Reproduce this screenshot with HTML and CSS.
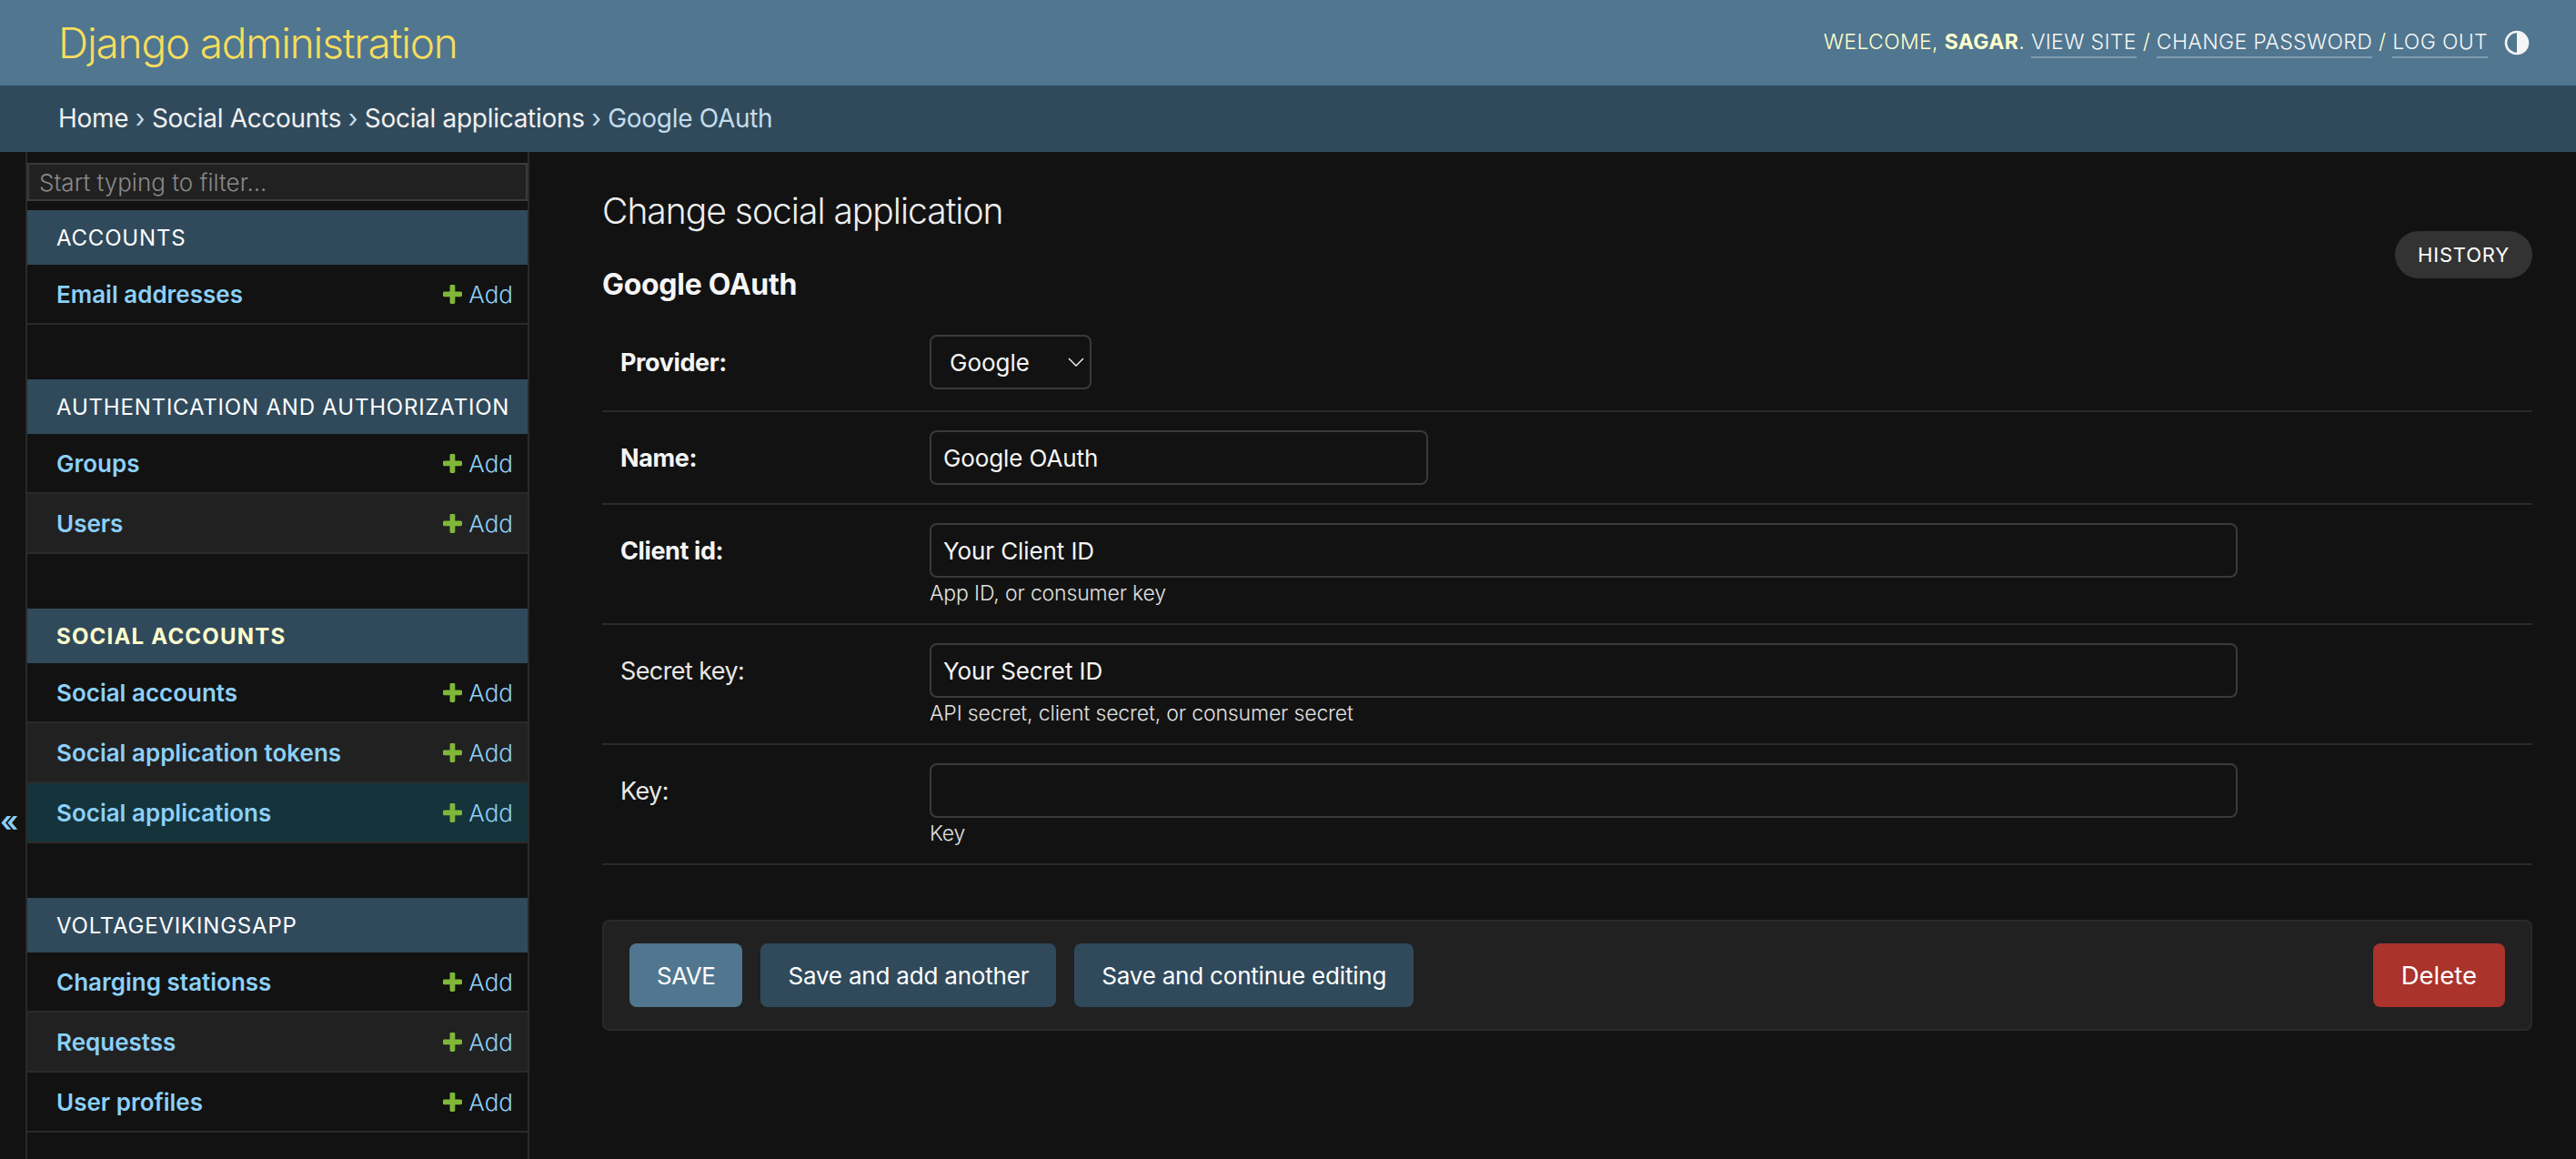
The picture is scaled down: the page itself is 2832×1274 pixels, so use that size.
FILE: index.html
```html
<!DOCTYPE html>
<html lang="en">
<head>
    <meta charset="UTF-8">
    <title>Change social application | Django site admin</title>
    <link rel="stylesheet" href="styles.css">
</head>
<body>

    <svg class="sprite" width="0" height="0">
        <symbol id="plus" viewBox="200 200 1400 1400">
            <path d="M1600 796v192q0 40-28 68t-68 28h-416v416q0 40-28 68t-68 28h-192q-40 0-68-28t-28-68v-416h-416q-40 0-68-28t-28-68v-192q0-40 28-68t68-28h416v-416q0-40 28-68t68-28h192q40 0 68 28t28 68v416h416q40 0 68 28t28 68z"/>
        </symbol>
    </svg>

    <header class="topbar">
        <div class="site-name">Django administration</div>
        <div class="user-tools">
            <div>Welcome, <strong>Sagar</strong>. <a href="#">View site</a> / <a href="#">Change password</a> / <a href="#">Log out</a></div>
            <svg class="theme-icon" viewBox="0 0 24 24"><path d="M12 22C6.477 22 2 17.523 2 12S6.477 2 12 2s10 4.477 10 10-4.477 10-10 10zm0-2V4a8 8 0 1 0 0 16z"/></svg>
        </div>
    </header>

    <div class="breadcrumbs">
        <a href="#">Home</a> › <a href="#">Social Accounts</a> › <a href="#">Social applications</a> › Google OAuth
    </div>

    <div class="main">
        <div class="toggle-nav">«</div>

        <nav class="sidebar">
            <div class="filter"><input type="text" placeholder="Start typing to filter..."></div>

            <section class="app">
                <h2 class="app-title">Accounts</h2>
                <div class="app-row"><a href="#" class="model">Email addresses</a><a href="#" class="add"><svg class="plus"><use href="#plus"/></svg>Add</a></div>
            </section>

            <section class="app">
                <h2 class="app-title">Authentication and Authorization</h2>
                <div class="app-row"><a href="#" class="model">Groups</a><a href="#" class="add"><svg class="plus"><use href="#plus"/></svg>Add</a></div>
                <div class="app-row alt"><a href="#" class="model">Users</a><a href="#" class="add"><svg class="plus"><use href="#plus"/></svg>Add</a></div>
            </section>

            <section class="app">
                <h2 class="app-title current">Social Accounts</h2>
                <div class="app-row"><a href="#" class="model">Social accounts</a><a href="#" class="add"><svg class="plus"><use href="#plus"/></svg>Add</a></div>
                <div class="app-row alt"><a href="#" class="model">Social application tokens</a><a href="#" class="add"><svg class="plus"><use href="#plus"/></svg>Add</a></div>
                <div class="app-row selected"><a href="#" class="model">Social applications</a><a href="#" class="add"><svg class="plus"><use href="#plus"/></svg>Add</a></div>
            </section>

            <section class="app">
                <h2 class="app-title">Voltagevikingsapp</h2>
                <div class="app-row"><a href="#" class="model">Charging stationss</a><a href="#" class="add"><svg class="plus"><use href="#plus"/></svg>Add</a></div>
                <div class="app-row alt"><a href="#" class="model">Requestss</a><a href="#" class="add"><svg class="plus"><use href="#plus"/></svg>Add</a></div>
                <div class="app-row"><a href="#" class="model">User profiles</a><a href="#" class="add"><svg class="plus"><use href="#plus"/></svg>Add</a></div>
            </section>
        </nav>

        <main class="content">
            <div class="content-head">
                <div>
                    <h1>Change social application</h1>
                    <h2 class="object-name">Google OAuth</h2>
                </div>
                <a href="#" class="history">History</a>
            </div>

            <form>
                <div class="form-row provider-row">
                    <label class="required">Provider:</label>
                    <div class="select-wrap">
                        <select><option>Google</option></select>
                        <svg class="chevron" viewBox="0 0 18 10"><path d="M1 1l8 8 8-8"/></svg>
                    </div>
                </div>
                <div class="form-row">
                    <label class="required">Name:</label>
                    <input type="text" class="short" value="Google OAuth">
                </div>
                <div class="form-row">
                    <label class="required">Client id:</label>
                    <div class="field">
                        <input type="text" class="long" value="Your Client ID">
                        <div class="help">App ID, or consumer key</div>
                    </div>
                </div>
                <div class="form-row">
                    <label>Secret key:</label>
                    <div class="field">
                        <input type="text" class="long" value="Your Secret ID">
                        <div class="help">API secret, client secret, or consumer secret</div>
                    </div>
                </div>
                <div class="form-row">
                    <label>Key:</label>
                    <div class="field">
                        <input type="text" class="long">
                        <div class="help">Key</div>
                    </div>
                </div>

                <div class="submit-row">
                    <button type="button" class="btn default">Save</button>
                    <button type="button" class="btn">Save and add another</button>
                    <button type="button" class="btn">Save and continue editing</button>
                    <a href="#" class="btn delete">Delete</a>
                </div>
            </form>
        </main>
    </div>

</body>
</html>
```

FILE: styles.css
```css
* {
    box-sizing: border-box;
}

html, body {
    height: 100%;
}

body {
    margin: 0;
    display: flex;
    flex-direction: column;
    overflow: hidden;
    font-family: Inter, "Noto Sans", sans-serif;
    font-size: 28px;
    color: #f5f5f5;
    background: #121212;
}

a {
    color: inherit;
    text-decoration: none;
}

.sprite {
    position: absolute;
}

/* top bars */
.topbar {
    height: 94px;
    flex: none;
    display: flex;
    align-items: center;
    justify-content: space-between;
    padding: 0 49px 0 64px;
    background: #507690;
}

.site-name {
    font-size: 46px;
    font-weight: 300;
    letter-spacing: -1.2px;
    color: #f5dd5d;
}

.user-tools {
    display: flex;
    align-items: center;
    font-size: 23px;
    font-weight: 300;
    letter-spacing: 0.35px;
    text-transform: uppercase;
    color: #ffc;
}

.user-tools > div {
    margin-top: -3px;
}

.user-tools strong {
    font-weight: 700;
}

.user-tools a {
    padding-bottom: 2px;
    color: #f5f5f5;
    border-bottom: 2px solid #7f9eb2;
}

.theme-icon {
    width: 32px;
    height: 32px;
    margin-left: 16px;
    fill: #f5f5f5;
}

.breadcrumbs {
    height: 73px;
    flex: none;
    padding: 0 64px;
    font-size: 28px;
    line-height: 73px;
    font-weight: 400;
    letter-spacing: -0.3px;
    color: #c4dce8;
    background: #304a5c;
}

.breadcrumbs a {
    color: #f0f0f0;
}

.main {
    flex: 1;
    display: flex;
    min-height: 0;
}

.toggle-nav {
    width: 28px;
    flex: none;
    padding-top: 711px;
    font-size: 32px;
    line-height: 50px;
    font-weight: 600;
    color: #8cd0f8;
}

/* sidebar */
.sidebar {
    width: 554px;
    flex: none;
    padding-top: 12px;
    border-left: 2px solid #2a2a2a;
    border-right: 2px solid #2a2a2a;
}

.filter input {
    display: block;
    width: 100%;
    height: 42px;
    padding: 0 11px;
    border: 2px solid #3a3a3a;
    font: inherit;
    font-size: 26px;
    font-weight: 300;
    color: #f5f5f5;
    background: #212121;
}

.filter input::placeholder {
    color: #8a8a8a;
}

.filter {
    margin-bottom: 10px;
}

.app {
    margin-bottom: 60px;
}

.app-title {
    height: 60px;
    margin: 0;
    padding: 0 32px;
    display: flex;
    align-items: center;
    font-size: 24px;
    font-weight: 400;
    letter-spacing: 0.8px;
    text-transform: uppercase;
    white-space: nowrap;
    color: #fff;
    background: #304a5c;
}

.app-title.current {
    font-weight: 700;
    letter-spacing: 1.2px;
    color: #ffc;
}

.app-row {
    height: 66px;
    display: flex;
    align-items: center;
    justify-content: space-between;
    padding: 0 16px 0 32px;
    border-bottom: 2px solid #2a2a2a;
}

.app-row.alt {
    background: #212121;
}

.app-row.selected {
    background: #15333a;
}

.model {
    font-size: 26px;
    font-weight: 600;
    color: #8cd0f8;
}

.add {
    display: flex;
    align-items: center;
    gap: 7px;
    font-size: 26px;
    font-weight: 300;
    color: #8cd0f8;
}

.plus {
    width: 21px;
    height: 21px;
    fill: #7fb739;
}

/* content */
.content {
    flex: 1;
    min-width: 0;
    padding: 40px 48px 0 80px;
}

.content-head {
    display: flex;
    justify-content: space-between;
    align-items: flex-start;
}

h1 {
    margin: 0;
    font-size: 39px;
    line-height: 50px;
    font-weight: 300;
    letter-spacing: -1px;
    color: #eee;
}

.object-name {
    margin: 35px 0 0;
    font-size: 32px;
    line-height: 42px;
    font-weight: 700;
    letter-spacing: -0.3px;
    color: #f5f5f5;
}

.history {
    margin-top: 47px;
    height: 52px;
    padding: 0 25px;
    display: flex;
    align-items: center;
    font-size: 22px;
    letter-spacing: 0.8px;
    text-transform: uppercase;
    color: #fff;
    background: #333;
    border-radius: 26px;
}

.form-row {
    display: flex;
    padding: 20px;
    border-bottom: 2px solid #2a2a2a;
}

.provider-row {
    margin-top: 14px;
    padding-bottom: 23px;
}

.form-row label {
    width: 340px;
    flex: none;
    padding-top: 14px;
    font-size: 27px;
    font-weight: 400;
    letter-spacing: -0.6px;
    color: #e8e8e8;
}

.form-row label.required {
    font-weight: 700;
    letter-spacing: -0.4px;
    color: #f5f5f5;
}

.select-wrap {
    position: relative;
    width: 178px;
}

.select-wrap select {
    width: 100%;
    height: 60px;
    padding: 0 20px;
    appearance: none;
    border: 2px solid #3a3a3a;
    border-radius: 8px;
    font: inherit;
    font-size: 26px;
    color: #f5f5f5;
    background: #121212;
}

.chevron {
    position: absolute;
    top: 25px;
    right: 8px;
    width: 18px;
    height: 10px;
    fill: none;
    stroke: #e8e8e8;
    stroke-width: 1.5;
}

.form-row input {
    display: block;
    height: 60px;
    padding: 0 13px;
    border: 2px solid #3a3a3a;
    border-radius: 8px;
    font: inherit;
    font-size: 26px;
    letter-spacing: -0.1px;
    color: #f5f5f5;
    background: #121212;
}

.form-row input.short {
    width: 548px;
}

.form-row input.long {
    width: 1438px;
}

.help {
    margin-top: 4px;
    font-size: 23px;
    line-height: 26px;
    font-weight: 300;
    letter-spacing: -0.15px;
    color: #e0e0e0;
}

.submit-row {
    display: flex;
    align-items: center;
    gap: 20px;
    margin-top: 60px;
    padding: 24px 28px 24px 28px;
    border: 2px solid #2a2a2a;
    border-radius: 8px;
    background: #212121;
}

.btn {
    height: 70px;
    display: flex;
    align-items: center;
    padding: 0 30px;
    border: none;
    border-radius: 8px;
    font: inherit;
    font-size: 26px;
    font-weight: 400;
    letter-spacing: -0.2px;
    color: #fff;
    background: #304a5c;
}

.btn.default {
    letter-spacing: -0.5px;
    text-transform: uppercase;
    background: #507690;
}

.btn.delete {
    margin-left: auto;
    padding: 0 31px;
    font-size: 27.5px;
    letter-spacing: 0;
    background: #aa332c;
}
```
